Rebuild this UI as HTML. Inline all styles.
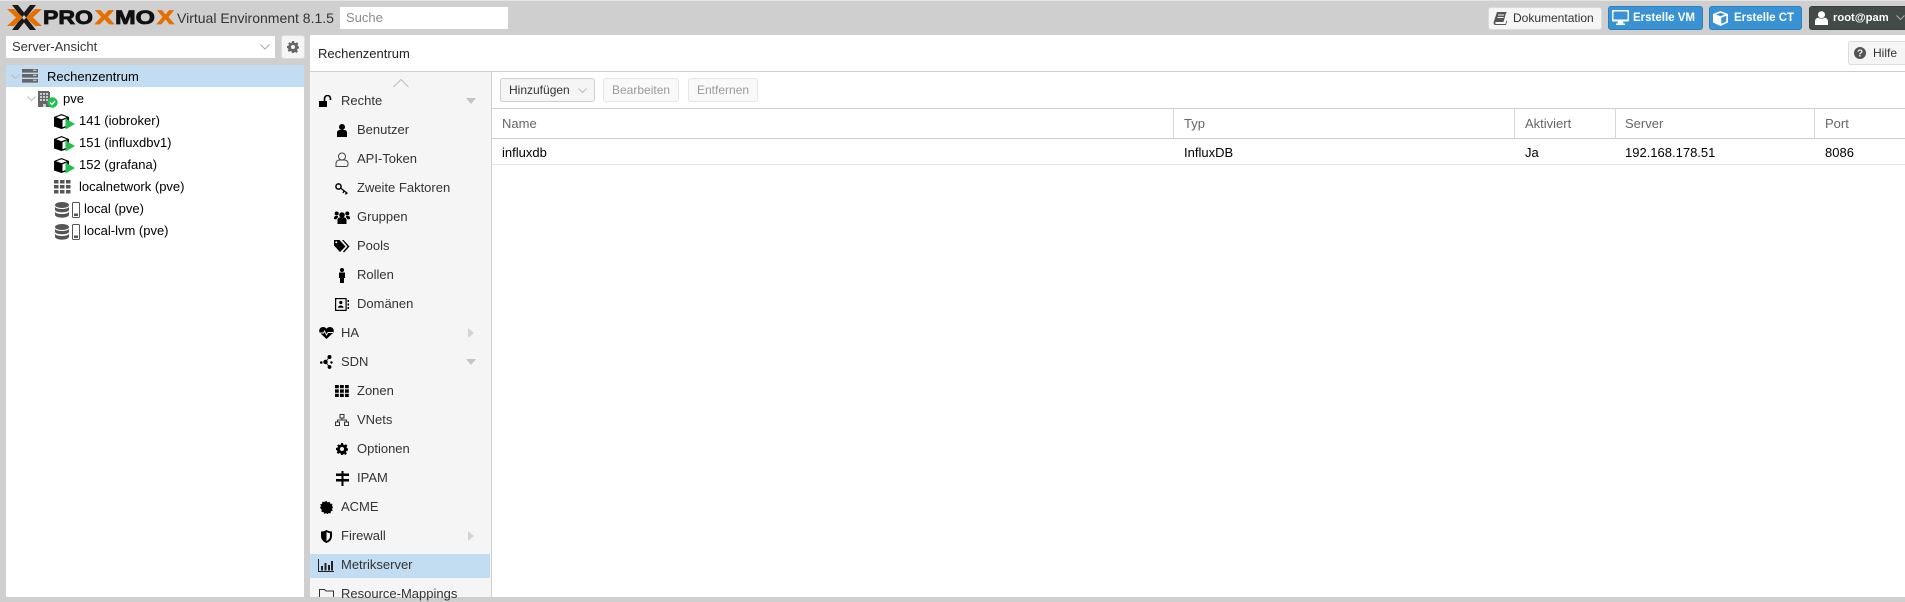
<!DOCTYPE html>
<html><head><meta charset="utf-8"><title>Proxmox</title>
<style>
html,body{margin:0;padding:0}
body{width:1905px;height:597px;overflow:hidden;position:relative;background:#cfcfcf;font:13px/16px "Liberation Sans",sans-serif;color:#000}
.a,.t,svg.i{position:absolute}
.t{white-space:nowrap;height:16px}
.b{position:absolute;box-sizing:border-box;border:1px solid #dcdcdc;border-radius:3px;background:#f5f5f5}
.g{color:#666}
.d{color:#9a9a9a;font-size:12px}
</style></head><body>
<div class="a" style="left:0;top:0;width:1905px;height:1px;background:#e4e4e4"></div>

<!-- logo -->
<svg class="i" style="left:6px;top:4px" width="172" height="28" viewBox="0 0 172 28">
<path d="M12 1h6l6 7.500L30 1h6L27 12.500 24 16 21 12.500zM12 26h6l6-7.500L30 26h6L27 14.500 24 11 21 14.500z" fill="#1a1a1a" transform="translate(-6,0)"/>
<path d="M1 5h7l9 8.500L8 22H1l9-8.500z" fill="#e57000"/>
<path d="M36 5h-7l-9 8.500 9 8.500h7l-9-8.500z" fill="#e57000"/>
<text x="37" y="20" font-family="Liberation Sans" font-weight="700" font-size="19" textLength="50" lengthAdjust="spacingAndGlyphs" fill="#111" stroke="#111" stroke-width=".8">PRO</text>
<text x="89" y="20" font-family="Liberation Sans" font-weight="700" font-size="19" textLength="19" lengthAdjust="spacingAndGlyphs" fill="#e57000" stroke="#e57000" stroke-width=".8">X</text>
<text x="109" y="20" font-family="Liberation Sans" font-weight="700" font-size="19" textLength="40" lengthAdjust="spacingAndGlyphs" fill="#111" stroke="#111" stroke-width=".8">MO</text>
<text x="151" y="20" font-family="Liberation Sans" font-weight="700" font-size="19" textLength="17" lengthAdjust="spacingAndGlyphs" fill="#e57000" stroke="#e57000" stroke-width=".8">X</text>
</svg>
<div class="t" style="left:177px;top:10px;color:#333;font-size:14px">Virtual Environment 8.1.5</div>
<div class="a" style="left:340px;top:7px;width:168px;height:22px;background:#fff"></div>
<div class="t" style="left:346px;top:10px;color:#8a8a8a">Suche</div>

<!-- top right -->
<div class="b" style="left:1488px;top:7px;width:114px;height:23px"></div>
<svg class="i" style="left:1493px;top:11px" width="15" height="14" viewBox="0 0 15 14"><path d="M4 1h10l-1 1-2.500 9H2.500C2 12 2.500 13 3 13h9.500l1-3.500.7.5-1.200 4H2.500C1 14 0 12.500 1 10z" fill="#555"/><path d="M5 4h6M4.500 6.500h6" stroke="#f5f5f5" stroke-width="1"/></svg>
<div class="t" style="left:1513px;top:10px;color:#333;font-size:12px">Dokumentation</div>

<div class="b" style="left:1608px;top:6px;width:95px;height:24px;background:#3892d4;border-color:#2f7fbc"></div>
<svg class="i" style="left:1612px;top:10px" width="17" height="15" viewBox="0 0 17 15"><path d="M1 0h15a1 1 0 0 1 1 1v9.500a1 1 0 0 1-1 1h-5l.5 2h1.500v1.500H4V13.500h1.500l.5-2H1a1 1 0 0 1-1-1V1a1 1 0 0 1 1-1zm.5 1.500v8h14v-8z" fill="#fff"/></svg>
<div class="t" style="left:1633px;top:10px;color:#fff;font-weight:700;font-size:11.500px">Erstelle VM</div>

<div class="b" style="left:1709px;top:6px;width:93px;height:24px;background:#3892d4;border-color:#2f7fbc"></div>
<svg class="i" style="left:1713px;top:11px" width="15" height="15" viewBox="0 0 15 15"><path d="M7.500 0L15 3v8.500L7.500 15 0 11.500V3zM7.500 1.800L3 3.500l4.500 1.800L12 3.500zM8.300 6.800v6l5-2.300V4.800z" fill="#fff" fill-rule="evenodd"/></svg>
<div class="t" style="left:1734px;top:10px;color:#fff;font-weight:700;font-size:11.500px">Erstelle CT</div>

<div class="b" style="left:1809px;top:6px;width:100px;height:24px;background:#434b49;border-color:#3a4240"></div>
<svg class="i" style="left:1815px;top:11px" width="13" height="14" viewBox="0 0 13 14"><circle cx="6.500" cy="3.700" r="3.500" fill="#fff"/><path d="M0 14v-3.500C0 8 2 6.800 3.500 6.800c1.800 1.300 4.200 1.300 6 0C11 6.800 13 8 13 10.500V14z" fill="#fff"/></svg>
<div class="t" style="left:1833px;top:10px;color:#fff;font-weight:700;font-size:11.200px">root@pam</div>
<svg class="i" style="left:1896px;top:15px" width="9" height="6"><path d="M.5.500l4 4 4-4" fill="none" stroke="#aaa"/></svg>

<!-- left -->
<div class="a" style="left:6px;top:36px;width:269px;height:22px;background:#fff"></div>
<div class="t" style="left:12px;top:39px;color:#333">Server-Ansicht</div>
<svg class="i" style="left:260px;top:44px" width="10" height="6"><path d="M.5.500l4.500 4.500L9.500.500" fill="none" stroke="#aaa"/></svg>
<div class="b" style="left:281px;top:35px;width:24px;height:24px"></div>
<svg class="i" style="left:287px;top:41px" width="12" height="12" viewBox="0 0 24 24"><path d="M10 0h4l.7 3.300 2.300 1 2.900-1.800 2.800 2.800L21 8.200l1 2.300 2 .5v4l-3 .7-1 2.300 1.800 2.900-2.800 2.800-2.900-1.800-2.300 1L14 24h-4l-.7-3-2.300-1-2.900 1.800-2.800-2.800L3 17l-1-2.300-2-.7v-4l3-.7 1-2.300L2.200 5.300 5 2.500 8 4.300l1.500-1zM12 8a4 4 0 1 0 0 8 4 4 0 0 0 0-8z" fill="#666" fill-rule="evenodd"/></svg>

<div class="a" style="left:6px;top:65px;width:298px;height:532px;background:#fff"></div>
<div class="a" style="left:6px;top:65px;width:298px;height:22px;background:#c2ddf2"></div>
<svg class="i" style="left:11px;top:74px" width="9" height="6"><path d="M.5.500l4 4 4-4" fill="none" stroke="#bbb"/></svg>
<svg class="i" style="left:22px;top:69px" width="16" height="14" viewBox="0 0 16 14"><path d="M0 0h16v3.600H0zM0 5h16v3.600H0zM0 10h16v3.600H0z" fill="#666"/><path d="M11 1.300h3.500M11 6.300h3.500M11 11.300h3.500" stroke="#ddd"/></svg>
<div class="t" style="left:47px;top:69px">Rechenzentrum</div>

<svg class="i" style="left:27px;top:96px" width="9" height="6"><path d="M.5.500l4 4 4-4" fill="none" stroke="#bbb"/></svg>
<svg class="i" style="left:38px;top:91px" width="20" height="17" viewBox="0 0 20 17"><path d="M0 0h11v1h1v15H0z" fill="#666"/><path d="M2 2h2v2H2zM5 2h2v2H5zM8 2h2v2H8zM2 5h2v2H2zM5 5h2v2H5zM8 5h2v2H8zM2 8h2v2H2zM5 8h2v2H5zM8 8h2v2H8zM5 13h3v3H5z" fill="#ccc"/><circle cx="14.500" cy="11.500" r="5.200" fill="#21bf4b"/><path d="M12 11.500l2 2 3-3.500" fill="none" stroke="#fff" stroke-width="1.400"/></svg>
<div class="t" style="left:63px;top:91px">pve</div>

<svg width="0" height="0" style="position:absolute"><defs>
<g id="cube"><path d="M7.500 0L15 3v9.500L7.500 15 0 12.500V3z" fill="#000"/><path d="M7.500 1.200L12.800 3.200 7.500 5.200 2.200 3.200z" fill="#fff"/><path d="M8.500 6.300l4.500-1.800v7l-4.500 1.800z" fill="#fff"/><path d="M11.500 4.500L21 10l-9.500 5.500z" fill="#21bf4b"/></g>
<g id="stor"><ellipse cx="7" cy="3" rx="7" ry="3" fill="#555"/><path d="M0 4.800c1 3 13 3 14 0V8c-1 3-13 3-14 0zM0 9.800c1 3 13 3 14 0V13c-1 3.500-13 3.500-14 0z" fill="#555"/><rect x="17.500" y=".5" width="7" height="15" rx="1" fill="#fff" stroke="#555"/><rect x="19" y="11.500" width="4" height="2.500" fill="#555"/></g>
</defs></svg>
<svg class="i" style="left:54px;top:114px" width="22" height="16"><use href="#cube"/></svg>
<div class="t" style="left:79px;top:113px">141 (iobroker)</div>
<svg class="i" style="left:54px;top:136px" width="22" height="16"><use href="#cube"/></svg>
<div class="t" style="left:79px;top:135px">151 (influxdbv1)</div>
<svg class="i" style="left:54px;top:158px" width="22" height="16"><use href="#cube"/></svg>
<div class="t" style="left:79px;top:157px">152 (grafana)</div>
<svg class="i" style="left:54px;top:180px" width="17" height="14"><path d="M0 0h4.500v3.500H0zM6 0h4.500v3.500H6zM12 0h4.500v3.500H12zM0 5h4.500v3.500H0zM6 5h4.500v3.500H6zM12 5h4.500v3.500H12zM0 10h4.500v3.500H0zM6 10h4.500v3.500H6zM12 10h4.500v3.500H12z" fill="#555"/></svg>
<div class="t" style="left:79px;top:179px">localnetwork (pve)</div>
<svg class="i" style="left:55px;top:202px" width="26" height="17"><use href="#stor"/></svg>
<div class="t" style="left:84px;top:201px">local (pve)</div>
<svg class="i" style="left:55px;top:224px" width="26" height="17"><use href="#stor"/></svg>
<div class="t" style="left:84px;top:223px">local-lvm (pve)</div>

<!-- content -->
<div class="a" style="left:310px;top:35px;width:1595px;height:562px;background:#fff"></div>
<div class="t" style="left:318px;top:46px;color:#222">Rechenzentrum</div>
<div class="b" style="left:1848px;top:41px;width:60px;height:24px"></div>
<svg class="i" style="left:1854px;top:47px" width="12" height="12"><circle cx="6" cy="6" r="6" fill="#555"/><text x="6" y="9.500" font-family="Liberation Sans" font-weight="700" font-size="10" text-anchor="middle" fill="#f5f5f5">?</text></svg>
<div class="t" style="left:1873px;top:45px;color:#333;font-size:12px">Hilfe</div>
<div class="a" style="left:310px;top:71px;width:1595px;height:1px;background:#cfcfcf"></div>

<!-- menu -->
<div class="a" style="left:310px;top:72px;width:181px;height:525px;background:#f5f5f5"></div>
<div class="a" style="left:491px;top:72px;width:1px;height:525px;background:#cfcfcf"></div>
<svg class="i" style="left:393px;top:79px" width="16" height="9"><path d="M.5 8l7.500-7.500L15.500 8" fill="none" stroke="#bbb"/></svg>
<div class="a" style="left:310px;top:554px;width:180px;height:24px;background:#c2ddf2"></div>

<svg class="i" style="left:319px;top:95px" width="14" height="12" viewBox="0 0 14 12"><path d="M0 6h8v6H0z" fill="#000"/><path d="M5.500 6V3.500a3 3 0 0 1 6 0V5" fill="none" stroke="#000" stroke-width="1.600"/></svg>
<div class="t" style="left:341px;top:93px;color:#333">Rechte</div>
<svg class="i" style="left:466px;top:98px" width="10" height="6"><path d="M0 0h10L5 6z" fill="#c4c4c4"/></svg>

<svg class="i" style="left:336px;top:124px" width="12" height="13"><circle cx="6" cy="3" r="3" fill="#000"/><path d="M1 13V8.500C1 7 2.500 6 3.500 6h5C9.500 6 11 7 11 8.500V13z" fill="#000"/></svg>
<div class="t" style="left:357px;top:122px;color:#333">Benutzer</div>

<svg class="i" style="left:335px;top:152px" width="14" height="15"><circle cx="7" cy="4.500" r="3.500" fill="none" stroke="#444" stroke-width="1"/><path d="M1 14.500v-3c0-2 1.500-3.500 3.500-3.500h5c2 0 3.500 1.500 3.500 3.500v1c0 1-.7 2-2 2z" fill="none" stroke="#444" stroke-width="1"/></svg>
<div class="t" style="left:357px;top:151px;color:#333">API-Token</div>

<svg class="i" style="left:335px;top:183px" width="14" height="12"><circle cx="3.500" cy="3.500" r="2.600" fill="none" stroke="#000" stroke-width="1.500"/><path d="M5.500 5l7 5.500M9 8l-1 2M11.500 9.500l-1 2" stroke="#000" stroke-width="1.300" fill="none"/></svg>
<div class="t" style="left:357px;top:180px;color:#333">Zweite Faktoren</div>

<svg class="i" style="left:334px;top:211px" width="16" height="13"><circle cx="8" cy="4" r="2.800" fill="#000"/><circle cx="2.700" cy="2.500" r="2" fill="#000"/><circle cx="13.300" cy="2.500" r="2" fill="#000"/><path d="M3.500 13V9c0-1.500 1-2.500 2-2.500h5c1 0 2 1 2 2.500v4zM0 8V6.500C0 5.500 1 5 2 5h2v1.500C3 7 2.500 7.500 2.500 8.500zM16 8V6.500C16 5.500 15 5 14 5h-2v1.500c1 .5 1.500 1 1.500 2z" fill="#000"/></svg>
<div class="t" style="left:357px;top:209px;color:#333">Gruppen</div>

<svg class="i" style="left:334px;top:240px" width="16" height="13"><path d="M0 0h5.500l6 6.500L6 12 0 5.500z" fill="#000"/><path d="M8 0h1.500l6 6.500L10 12.500l-1-1 4.500-5z" fill="#000"/><circle cx="2.300" cy="2.300" r="1" fill="#f5f5f5"/></svg>
<div class="t" style="left:357px;top:238px;color:#333">Pools</div>

<svg class="i" style="left:338px;top:268px" width="8" height="15"><circle cx="4" cy="2" r="2" fill="#000"/><path d="M1 4.500h6V10H6v5H2v-5H1z" fill="#000"/></svg>
<div class="t" style="left:357px;top:267px;color:#333">Rollen</div>

<svg class="i" style="left:335px;top:298px" width="14" height="13"><rect x=".6" y=".6" width="10.500" height="11.800" fill="none" stroke="#000" stroke-width="1.200"/><circle cx="5.800" cy="4.500" r="1.600" fill="#000"/><path d="M3 9.800c0-3 5.500-3 5.500 0z" fill="#000"/><path d="M12.500 2h1.500v2h-1.500zM12.500 5.500h1.500v2h-1.500zM12.500 9h1.500v2h-1.500z" fill="#000"/></svg>
<div class="t" style="left:357px;top:296px;color:#333">Domänen</div>

<svg class="i" style="left:319px;top:327px" width="15" height="12"><path d="M7.500 12L1 6C-1 3.500 1 0 4 0c1.500 0 2.700.7 3.500 1.700C8.300.7 9.500 0 11 0c3 0 5 3.500 3 6z" fill="#000"/><path d="M1 6h3.500l1-2 2 4 1.500-2.500h5" fill="none" stroke="#f5f5f5" stroke-width=".9"/></svg>
<div class="t" style="left:341px;top:325px;color:#333">HA</div>
<svg class="i" style="left:468px;top:328px" width="6" height="10"><path d="M0 0l6 5-6 5z" fill="#d4d4d4"/></svg>

<svg class="i" style="left:320px;top:355px" width="13" height="14"><circle cx="9.500" cy="2" r="2" fill="#000"/><circle cx="5.500" cy="7" r="2.200" fill="#000"/><circle cx="1.300" cy="7.500" r="1.300" fill="#000"/><circle cx="9.500" cy="12" r="1.900" fill="#000"/><circle cx="11.500" cy="7.500" r="1.200" fill="#000"/><path d="M9.500 2L5.500 7l4 5" stroke="#000" fill="none" stroke-width=".7"/></svg>
<div class="t" style="left:341px;top:354px;color:#333">SDN</div>
<svg class="i" style="left:466px;top:359px" width="10" height="6"><path d="M0 0h10L5 6z" fill="#c4c4c4"/></svg>

<svg class="i" style="left:335px;top:385px" width="14" height="12"><path d="M0 0h3.800v3.300H0zM5 0h3.800v3.300H5zM10 0h3.800v3.300H10zM0 4.400h3.800v3.300H0zM5 4.400h3.800v3.300H5zM10 4.400h3.800v3.300H10zM0 8.700h3.800V12H0zM5 8.700h3.800V12H5zM10 8.700h3.800V12H10z" fill="#000"/></svg>
<div class="t" style="left:357px;top:383px;color:#333">Zonen</div>

<svg class="i" style="left:335px;top:414px" width="14" height="12"><path d="M5 .5h4v3.500H5zM.5 8h4v3.500h-4zM9.500 8h4v3.500h-4z" fill="none" stroke="#333"/><path d="M7 4v2M2.500 8V6h9v2" fill="none" stroke="#333"/></svg>
<div class="t" style="left:357px;top:412px;color:#333">VNets</div>

<svg class="i" style="left:336px;top:443px" width="12" height="12" viewBox="0 0 24 24"><path d="M10 0h4l.7 3.300 2.300 1 2.900-1.800 2.800 2.800L21 8.200l1 2.300 2 .5v4l-3 .7-1 2.300 1.800 2.900-2.800 2.800-2.900-1.800-2.300 1L14 24h-4l-.7-3-2.300-1-2.900 1.800-2.800-2.800L3 17l-1-2.300-2-.7v-4l3-.7 1-2.300L2.200 5.300 5 2.500 8 4.300l1.500-1zM12 8a4 4 0 1 0 0 8 4 4 0 0 0 0-8z" fill="#000" fill-rule="evenodd"/></svg>
<div class="t" style="left:357px;top:441px;color:#333">Optionen</div>

<svg class="i" style="left:336px;top:471px" width="13" height="15"><path d="M5.500 0h2v15h-2z" fill="#000"/><path d="M0 2.500h13v2.500H0zM0 8h13v2.500H0z" fill="#000"/></svg>
<div class="t" style="left:357px;top:470px;color:#333">IPAM</div>

<svg class="i" style="left:320px;top:501px" width="13" height="13" viewBox="0 0 13 13"><path d="M6.500 0l1.300 1.500L9.700.8l.6 1.900 2 .1-.2 2L13 6.500l-1 1.300.7 1.900-1.900.6-.1 2-2-.2-1.200 1-1.500-1-1.800.8-.7-1.900-2-.1.200-2L0 6.500l1-1.300L.3 3.300l1.900-.6.1-2 2 .2z" fill="#000"/></svg>
<div class="t" style="left:341px;top:499px;color:#333">ACME</div>

<svg class="i" style="left:321px;top:530px" width="11" height="13"><path d="M0 1.500C2 1.500 4 1 5.500 0 7 1 9 1.500 11 1.500V6c0 3.500-2.500 6-5.500 7C2.500 12 0 9.500 0 6z" fill="#000"/><path d="M5.500 2v9C7.500 10 9 8.300 9 6V3.200C7.500 3 6.500 2.600 5.500 2z" fill="#f5f5f5"/></svg>
<div class="t" style="left:341px;top:528px;color:#333">Firewall</div>
<svg class="i" style="left:468px;top:531px" width="6" height="10"><path d="M0 0l6 5-6 5z" fill="#d4d4d4"/></svg>

<svg class="i" style="left:318px;top:559px" width="16" height="13"><path d="M.5 0v12.500H16" fill="none" stroke="#222"/><path d="M3 7h2v4.500H3zM6.500 4h2v7.500h-2zM10 6h2v5.500h-2zM13 2h2v9.500h-2z" fill="#222"/></svg>
<div class="t" style="left:341px;top:557px;color:#333">Metrikserver</div>

<svg class="i" style="left:319px;top:589px" width="15" height="8"><path d="M.5 8V.500h5l1.500 1.500h7.500v6" fill="none" stroke="#333"/></svg>
<div class="t" style="left:341px;top:586px;color:#333">Resource-Mappings</div>

<!-- toolbar -->
<div class="b" style="left:500px;top:78px;width:95px;height:24px;border-color:#cfcfcf"></div>
<div class="t" style="left:509px;top:82px;color:#333;font-size:12px">Hinzufügen</div>
<svg class="i" style="left:578px;top:88px" width="9" height="6"><path d="M.5.500l4 4 4-4" fill="none" stroke="#bbb"/></svg>
<div class="b" style="left:603px;top:78px;width:76px;height:24px;background:#f9f9f9;border-color:#e6e6e6"></div>
<div class="t d" style="left:612px;top:82px">Bearbeiten</div>
<div class="b" style="left:688px;top:78px;width:70px;height:24px;background:#f9f9f9;border-color:#e6e6e6"></div>
<div class="t d" style="left:697px;top:82px">Entfernen</div>

<!-- grid -->
<div class="a" style="left:492px;top:108px;width:1413px;height:1px;background:#cfcfcf"></div>
<div class="a" style="left:492px;top:138px;width:1413px;height:1px;background:#cfcfcf"></div>
<div class="a" style="left:492px;top:164px;width:1413px;height:1px;background:#e4e4e4"></div>
<div class="a" style="left:1173px;top:109px;width:1px;height:29px;background:#d8d8d8"></div>
<div class="a" style="left:1514px;top:109px;width:1px;height:29px;background:#d8d8d8"></div>
<div class="a" style="left:1615px;top:109px;width:1px;height:29px;background:#d8d8d8"></div>
<div class="a" style="left:1814px;top:109px;width:1px;height:29px;background:#d8d8d8"></div>
<div class="t g" style="left:502px;top:116px">Name</div>
<div class="t g" style="left:1184px;top:116px">Typ</div>
<div class="t g" style="left:1525px;top:116px">Aktiviert</div>
<div class="t g" style="left:1625px;top:116px">Server</div>
<div class="t g" style="left:1825px;top:116px">Port</div>
<div class="t" style="left:502px;top:145px">influxdb</div>
<div class="t" style="left:1184px;top:145px">InfluxDB</div>
<div class="t" style="left:1525px;top:145px">Ja</div>
<div class="t" style="left:1625px;top:145px">192.168.178.51</div>
<div class="t" style="left:1825px;top:145px">8086</div>
</body></html>
